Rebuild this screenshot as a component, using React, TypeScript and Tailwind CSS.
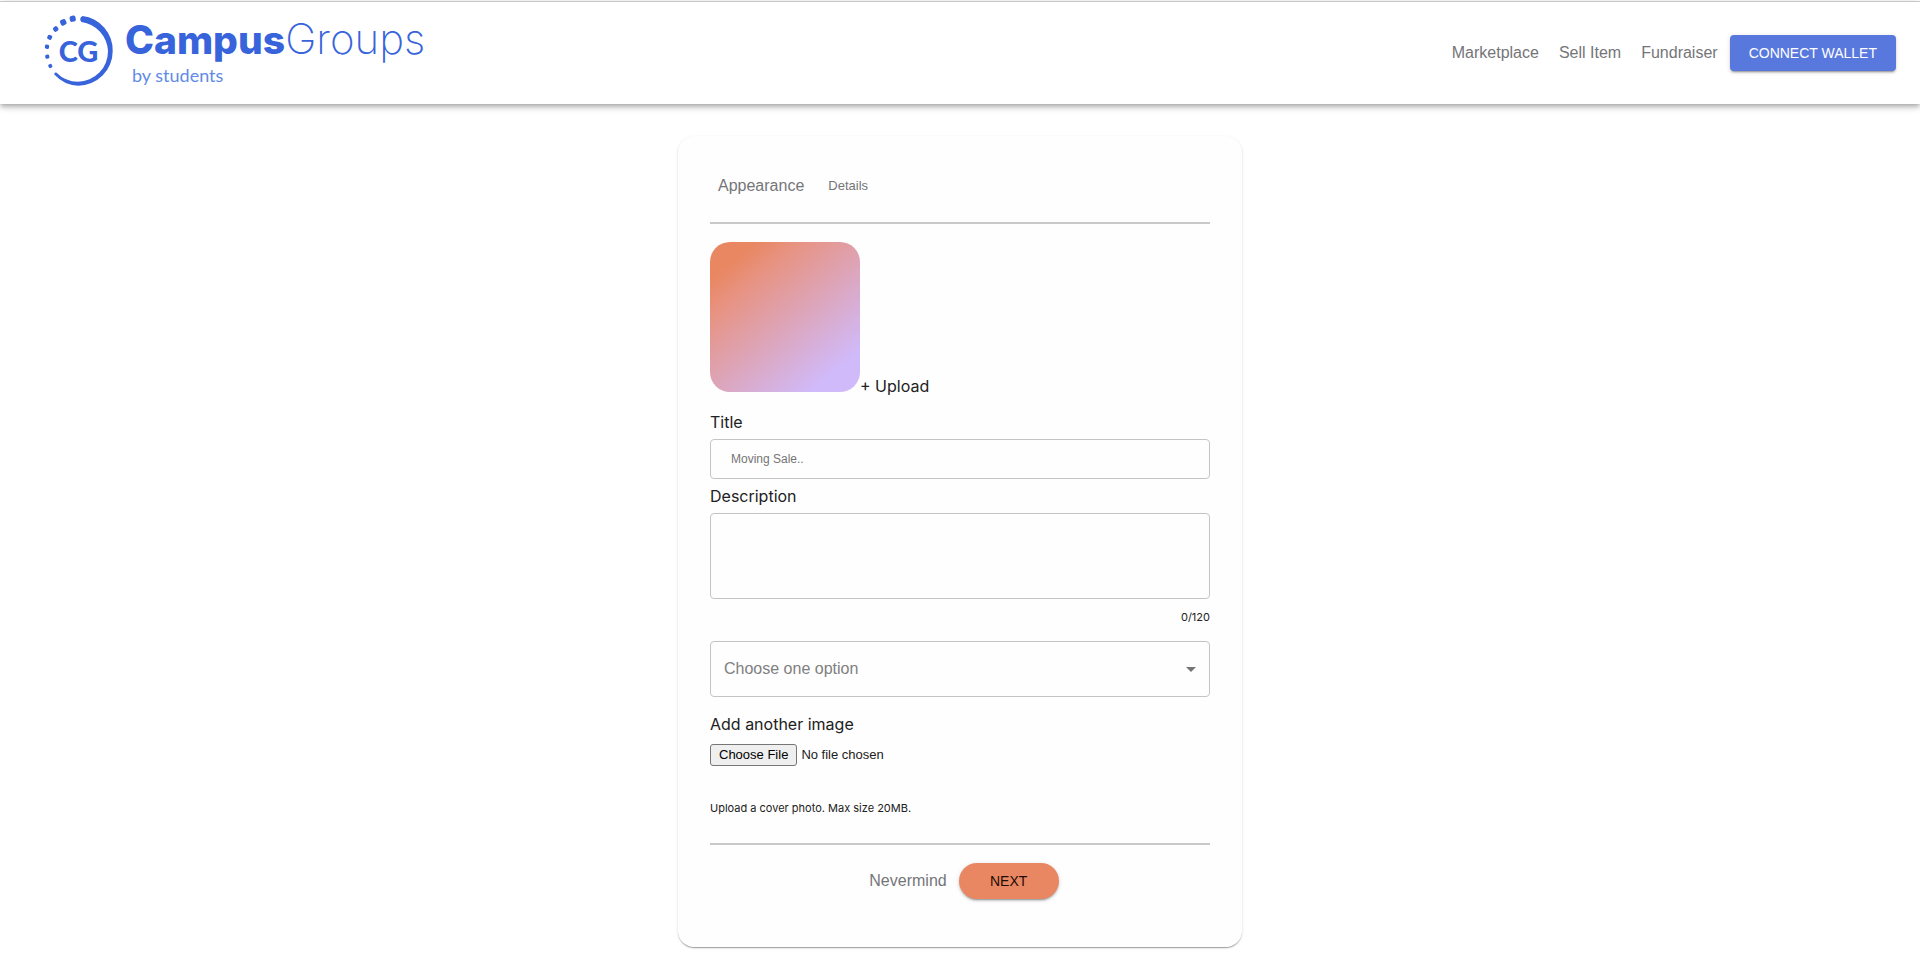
const navLinks = ["Marketplace", "Sell Item", "Fundraiser"]

const Logo = () => {
  return (
    <a href="#" aria-label="CampusGroups by students" className="flex items-center text-[#3763db]">
      <svg width="72" height="76" viewBox="0 0 72 76" fill="currentColor" aria-hidden="true">
        <path d="M40.500 0.900 A34.500 34.500 0 0 1 70.700 36 A34.500 34.500 0 0 1 36 70.700 A34.500 34.500 0 0 1 12.300 59.500 Q12 57 14.300 57.500 A31 31 0 0 0 36 66.800 A30.500 30.500 0 0 0 66 36 A30.500 30.500 0 0 0 39.500 7 Q36.500 3.500 40.500 0.900 Z" />
        <rect x="27.700" y="0.700" width="6" height="6" rx="2" transform="rotate(-10 30.700 3.700)" />
        <rect x="18.300" y="4.300" width="6" height="6" rx="2" transform="rotate(-25 21.300 7.300)" />
        <rect x="11.200" y="11.500" width="5" height="5" rx="1.800" transform="rotate(-40 13.700 14)" />
        <rect x="5.400" y="20" width="4.600" height="4.600" rx="1.500" transform="rotate(25 7.700 22.300)" />
        <rect x="2.900" y="29.600" width="4.200" height="4.200" rx="1.400" transform="rotate(8 5 31.700)" />
        <rect x="3.300" y="39.700" width="4" height="4" rx="1.300" transform="rotate(-8 5.300 41.700)" />
        <rect x="6.400" y="49.100" width="3.800" height="3.800" rx="1.300" transform="rotate(-25 8.300 51)" />
        <text x="36.500" y="47" textAnchor="middle" fontFamily="Lato, sans-serif" fontWeight="900" fontSize="29">
          CG
        </text>
      </svg>
      <span className="flex flex-col pb-1 pl-[11px]">
        <span className="flex h-12 items-baseline font-['Inter',sans-serif] leading-12">
          <span className="text-[39px] font-extrabold">Campus</span>
          <span className="text-[42px] font-extralight">Groups</span>
        </span>
        <span className="pl-[7px] font-['Lato',sans-serif] text-lg leading-6 text-[#5f8be6]">by students</span>
      </span>
    </a>
  )
}

const Header = () => {
  return (
    <header className="flex items-center justify-between border-t border-[#c4c8c8] bg-white py-[13px] pr-6 pl-[42px] shadow-[0_2px_4px_-1px_rgba(0,0,0,0.2),0_4px_5px_0_rgba(0,0,0,0.14),0_1px_10px_0_rgba(0,0,0,0.12)]">
      <Logo />
      <nav className="flex items-center gap-5 text-[#757579]">
        {navLinks.map((link) => (
          <a key={link} href="#">
            {link}
          </a>
        ))}
        <button
          type="button"
          className="-ml-2 h-9 rounded bg-[#5878de] px-[19px] text-sm text-white shadow-[0_3px_1px_-2px_rgba(0,0,0,0.2),0_2px_2px_0_rgba(0,0,0,0.14),0_1px_5px_0_rgba(0,0,0,0.12)]"
        >
          CONNECT WALLET
        </button>
      </nav>
    </header>
  )
}

const App = () => {
  return (
    <div className="min-h-screen bg-white font-['Liberation_Sans',Arial,sans-serif] text-base text-[#212121]">
      <div className="pt-px">
        <Header />
      </div>
      <main className="px-4 pt-8 pb-6">
        <form className="mx-auto flex max-w-[564px] flex-col rounded-2xl bg-[#fefefe] px-8 pb-12 shadow-[0_2px_1px_-1px_rgba(0,0,0,0.2),0_1px_1px_0_rgba(0,0,0,0.14),0_1px_3px_0_rgba(0,0,0,0.12)]">
          <div className="flex h-22 items-center gap-6 border-b-2 border-[#c9c9c9] px-2 pt-3.5 text-[#757579]">
            <button type="button">Appearance</button>
            <button type="button" className="text-[13px]">
              Details
            </button>
          </div>

          <div className="mt-[18px] flex items-end font-['Inter',sans-serif]">
            <div className="size-[150px] rounded-[20px] bg-[linear-gradient(140deg,#e88762_14%,#e89280_26%,#d0bafa_85%)]" />
            <button type="button" className="-mb-1.5">
              + Upload
            </button>
          </div>

          <label htmlFor="title" className="mt-[18px] font-['Inter',sans-serif]">
            Title
          </label>
          <input
            id="title"
            type="text"
            placeholder="Moving Sale.."
            className="mt-[5px] h-10 rounded border border-[#c4c4c4] px-5 text-xs placeholder:text-[#757575]"
          />

          <label htmlFor="description" className="mt-[5px] font-['Inter',sans-serif]">
            Description
          </label>
          <textarea id="description" className="mt-[5px] h-[86px] resize-none rounded border border-[#c4c4c4] p-3" />
          <span className="mt-2 self-end font-['Inter',sans-serif] text-[11px] leading-5">0/120</span>

          <div className="relative mt-3.5">
            <select
              aria-label="Choose one option"
              className="h-14 w-full appearance-none rounded border border-[#c4c4c4] px-[13px] text-[#808080]"
            >
              <option>Choose one option</option>
            </select>
            <svg
              className="pointer-events-none absolute top-4 right-[7px]"
              width="24"
              height="24"
              viewBox="0 0 24 24"
              fill="#757575"
              aria-hidden="true"
            >
              <path d="M7 10l5 5 5-5z" />
            </svg>
          </div>

          <label htmlFor="image" className="mt-[15px] font-['Inter',sans-serif]">
            Add another image
          </label>
          <input
            id="image"
            type="file"
            className="mt-2 text-[13px] file:mr-1 file:rounded-[3px] file:border file:border-solid file:border-[#767676] file:bg-[#efefef] file:px-2 file:text-black"
          />

          <p className="mt-[30px] border-b-2 border-[#c9c9c9] pb-[23px] font-['Inter',sans-serif] text-[11px] leading-6">
            Upload a cover photo. Max size 20MB.
          </p>

          <div className="mt-[18px] flex items-center justify-center gap-3 pl-2">
            <button type="button" className="text-[#757579]">
              Nevermind
            </button>
            <button
              type="submit"
              className="h-9 w-25 rounded-full bg-[#e88762] text-sm text-[#1f0c05] shadow-[0_3px_1px_-2px_rgba(0,0,0,0.2),0_2px_2px_0_rgba(0,0,0,0.14),0_1px_5px_0_rgba(0,0,0,0.12)]"
            >
              NEXT
            </button>
          </div>
        </form>
      </main>
    </div>
  )
}

export default App
